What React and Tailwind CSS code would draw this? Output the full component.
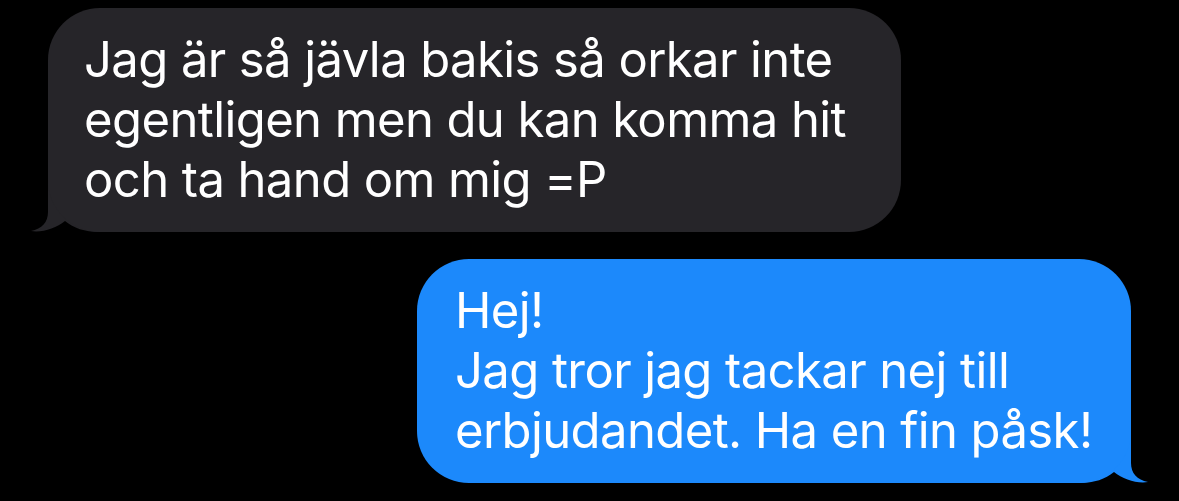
import React from 'react'

const font = { fontFamily: 'Inter, "Noto Sans", sans-serif' }

const GrayTail = () => (
  <svg className="absolute left-[-20px] bottom-0" width="80" height="58" viewBox="0 0 80 58">
    <path
      d="M20 0 L20 38 C20 48 14 55 3 57 C14 59 28 54 37 47 C46 54 56 58 72 58 L72 0 Z"
      fill="#262529"
    />
  </svg>
)

const BlueTail = () => (
  <svg className="absolute right-[-20px] bottom-0" width="80" height="58" viewBox="0 0 80 58">
    <path
      d="M60 0 L60 38 C60 48 66 55 77 57 C66 59 52 54 43 47 C34 54 24 58 8 58 L8 0 Z"
      fill="#1c89fb"
    />
  </svg>
)

const App = () => {
  return (
    <div className="w-[1179px] h-[501px] bg-black overflow-hidden pt-[8px] px-[48px] flex flex-col gap-[27px]" style={font}>
      {/* received */}
      <div className="self-start relative w-[853px]">
        <GrayTail />
        <div className="relative rounded-[52px] bg-[#262529] text-white text-[49px] leading-[60px] tracking-[-0.6px] pl-[36px] pt-[22px] pb-[22px]">
          Jag är så jävla bakis så orkar inte
          <br />
          egentligen men du kan komma hit
          <br />
          och ta hand om mig =P
        </div>
      </div>

      {/* sent */}
      <div className="self-end relative w-[714px]">
        <BlueTail />
        <div className="relative rounded-[52px] bg-[#1c89fb] text-white text-[49px] leading-[60px] tracking-[-0.6px] pl-[38px] pt-[22px] pb-[22px]">
          Hej!
          <br />
          Jag tror jag tackar nej till
          <br />
          erbjudandet. Ha en fin påsk!
        </div>
      </div>
    </div>
  )
}

export default App
